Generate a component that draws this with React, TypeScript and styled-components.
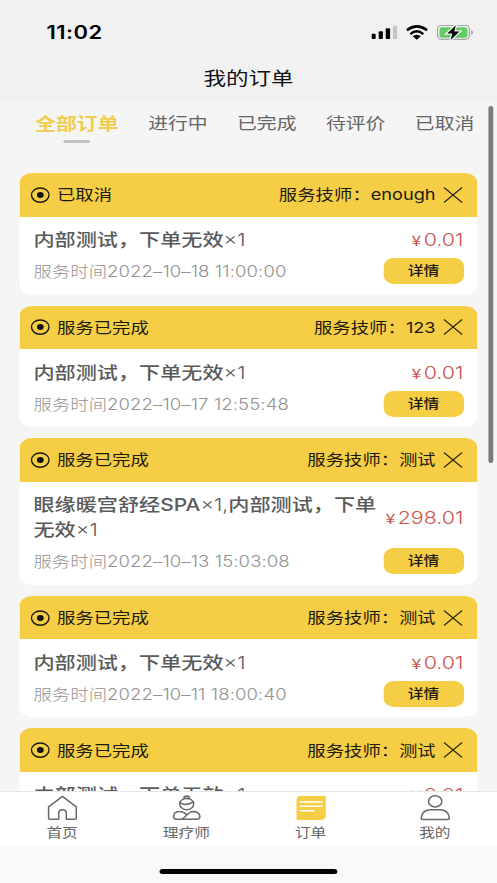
import React from "react";
import styled, { createGlobalStyle, css } from "styled-components";

/* The phone canvas is widened horizontally; x() converts on-screen widths to canvas widths. */
const STRETCH = 1.218;
const x = (n: number) => `${(n / STRETCH).toFixed(3)}px`;

const yellow = "#f5ce45";
const cjk = `"Noto Sans CJK SC", sans-serif`;
const latin = `Inter, "Noto Sans CJK SC", sans-serif`;

const GlobalStyle = createGlobalStyle`
  html, body { margin: 0; padding: 0; width: 497px; height: 883px; overflow: hidden; background: #f5f5f5; }
  * { box-sizing: border-box; }
`;

const Viewport = styled.div`
  width: 497px;
  height: 883px;
  overflow: hidden;
`;

const Phone = styled.div`
  width: ${x(497)};
  height: 883px;
  transform: scaleX(${STRETCH});
  transform-origin: 0 0;
  display: flex;
  flex-direction: column;
  position: relative;
  background: #f5f5f5;
  font-family: ${cjk};
  color: #1c1a10;
  white-space: nowrap;
`;

const Icon = styled.svg.attrs({ preserveAspectRatio: "none" })<{ $w: number; $h: number }>`
  display: block;
  flex: none;
  width: ${(p) => x(p.$w)};
  height: ${(p) => p.$h}px;
`;

const TopBar = styled.header`
  flex: none;
  height: 101px;
  background: #f1f1f1;
`;

const StatusBar = styled.div`
  height: 54px;
  padding: 11px ${x(19.5)} 0 ${x(46.5)};
  display: flex;
  align-items: center;
  justify-content: space-between;
`;

const Clock = styled.div`
  font: 600 18px/24px ${latin};
  letter-spacing: 0.4px;
  color: #000;
`;

const PageTitle = styled.h1`
  margin: 0;
  height: 47px;
  font: 400 18.5px/46px ${cjk};
  color: #111;
  text-align: center;
`;

const Tabs = styled.nav`
  flex: none;
  height: 72px;
  padding: 9px 0 0 ${x(35)};
  display: flex;
  gap: ${x(29.4)};
`;

const Tab = styled.div<{ $active?: boolean }>`
  display: flex;
  flex-direction: column;
  align-items: center;
  font: 400 16.3px/25px ${cjk};
  color: #666;
  ${(p) =>
    p.$active &&
    css`
      font-size: 17.2px;
      font-weight: 700;
      color: #efcc4c;
      &::after {
        content: "";
        width: ${x(27)};
        height: 3px;
        margin-top: 5px;
        border-radius: 2px;
        background: #c1c1c1;
      }
    `}
`;

const List = styled.main`
  flex: none;
  height: 618px;
  overflow: hidden;
  padding: 0 ${x(20)};
  display: flex;
  flex-direction: column;
  gap: 11.1px;
`;

const Card = styled.article`
  flex: none;
  border-radius: 10px;
  overflow: hidden;
  background: #fff;
`;

const CardHead = styled.div`
  height: 43.5px;
  padding: 0 ${x(13.5)} 0 ${x(10)};
  display: flex;
  align-items: center;
  background: ${yellow};
  font: 400 15.1px/24px ${cjk};
`;

const Status = styled.span`
  flex: 1;
  margin: -3px 0 0 ${x(7)};
`;

const Technician = styled.span`
  margin: -3px ${x(8)} 0 0;
`;

const TechName = styled.span`
  font-family: ${latin};
  font-size: 14.9px;
  line-height: 0;
`;

const CardBody = styled.div`
  padding: 11px ${x(13.5)} 10.5px ${x(13.5)};
  display: flex;
  flex-direction: column;
  gap: 5.5px;
`;

const Row = styled.div`
  display: flex;
  align-items: center;
  justify-content: space-between;
`;

const ItemName = styled.div`
  margin: -1.6px 0 1.6px;
  font: 500 17.35px/25px ${cjk};
  color: #5a5a5a;
`;

const Latin = styled.span<{ $weight?: number }>`
  font-family: ${latin};
  font-weight: ${(p) => p.$weight ?? 300};
  font-size: 17.2px;
  line-height: 0;
`;

const Price = styled.div`
  margin-top: -1px;
  font: 300 17.6px/25px ${latin};
  color: #c9524c;
  small {
    font: 400 14.5px/0 ${cjk};
    margin-right: 2px;
  }
`;

const Time = styled.div`
  height: 26px;
  font: 300 15.1px/24px ${cjk};
  color: #929292;
`;

const Digits = styled.span`
  font-family: ${latin};
  font-weight: 300;
  font-size: 15.2px;
  letter-spacing: 0.1px;
  line-height: 0;
`;

const DetailButton = styled.button`
  width: ${x(80)};
  height: 26px;
  padding: 0 0 2px;
  border: 0;
  border-radius: 8.5px;
  background: ${yellow};
  color: #1c1a10;
  font: 500 13px/24px ${cjk};
`;

const ScrollThumb = styled.div`
  position: absolute;
  top: 105.5px;
  right: ${x(4)};
  width: ${x(4)};
  height: 357px;
  border-radius: 2px;
  background: #7b7b7b;
`;

const NavBar = styled.nav`
  flex: none;
  height: 55px;
  border-top: 1px solid #e6e6e6;
  background: #fff;
  display: grid;
  grid-template-columns: repeat(4, 1fr);
`;

const NavItem = styled.div`
  display: flex;
  flex-direction: column;
  align-items: center;
  padding-top: 3px;
  font: 400 12.9px/22px ${cjk};
  color: #666;
`;

const Footer = styled.footer`
  flex: 1;
  padding-top: 23px;
  background: #f8f8f8;
  display: flex;
  justify-content: center;
`;

const HomeIndicator = styled.div`
  width: ${x(178)};
  height: 5px;
  border-radius: 3px;
  background: #000;
`;

const StatusIcons = () => (
  <Icon $w={106} $h={20} viewBox="0 0 106 20">
    <g transform="translate(0 -.7)">
      <rect x="0" y="11.5" width="4.2" height="5.2" rx="1" />
      <rect x="7.2" y="9" width="4.2" height="7.7" rx="1" />
      <rect x="14.2" y="6" width="4.4" height="10.7" rx="1" />
      <rect x="21.5" y="3.4" width="4.2" height="13.3" rx="1" fill="#c6c6c6" />
      <g fill="none" stroke="#000" strokeWidth="2.5">
        <path d="M35.4 8Q45.3 .2 55.6 8" />
        <path d="M38.9 11.8Q45.3 6.2 51.8 11.8" />
      </g>
      <path d="M41.2 14Q45.3 11 49.4 14L45.3 17.4Z" />
      <rect x="66" y="3.2" width="32" height="13.8" rx="4" fill="none" stroke="#a5a5a5" strokeWidth="1.2" />
      <rect x="68" y="5" width="28" height="10.4" rx="2.5" fill="#63cb63" />
      <path d="M99.8 8v4.4q1.6-.5 1.6-2.2T99.8 8Z" fill="#999" />
      <path d="M84.3 3 75.8 11.2H80.8L79.2 17.6 88 9.2H82.9Z" stroke="#f1f1f1" strokeWidth="2.6" paintOrder="stroke" />
    </g>
  </Icon>
);

const TargetIcon = () => (
  <Icon $w={20} $h={18} viewBox="0 0 20 18" fill="none" stroke="#1c1a10">
    <ellipse cx="9.8" cy="9.1" rx="8.8" ry="7.1" strokeWidth="1.4" />
    <ellipse cx="9.9" cy="9" rx="3.4" ry="2.9" fill="#111" stroke="none" />
  </Icon>
);

const CloseIcon = () => (
  <Icon $w={20} $h={18} viewBox="0 0 20 18" fill="none" stroke="#2b2612" strokeWidth="1.15">
    <path d="M.6 1.5 18.8 16.5M18.8 1.5.6 16.5" />
  </Icon>
);

const line = { fill: "none", stroke: "#696969", strokeWidth: 1.5, strokeLinejoin: "round" as const, strokeLinecap: "round" as const };

const HomeIcon = () => (
  <Icon $w={32} $h={26} viewBox="0 0 32 26" {...line}>
    <path d="M2.3 11.8 16.2 1.4 30 11.8V23Q30 24.3 28.8 24.3H20V18.2Q20 14.8 16.2 14.8T12.4 18.2V24.3H3.5Q2.3 24.3 2.3 23Z" />
  </Icon>
);

const TherapistIcon = () => (
  <Icon $w={32} $h={26} viewBox="0 0 32 26" {...line}>
    <ellipse cx="16.2" cy="9" rx="7" ry="5.7" />
    <ellipse cx="16.2" cy="2.3" rx="2.7" ry="1.3" />
    <path d="M9.4 7.6Q15.5 11.6 22.6 6.8" />
    <path d="M11.6 24.3H6.2Q3 24.3 3 21.6 3.2 16.4 9.2 16.4 13.2 16.2 15.8 19.8M11.6 24.3 19.6 17.2Q21 16.4 23.2 16.4 29.2 16.8 29.4 21.6 29.4 24.3 26.4 24.3Z" />
  </Icon>
);

const OrdersIcon = () => (
  <Icon $w={32} $h={26} viewBox="0 0 32 26">
    <path d="M5.5.9H31V20Q31 25 25.8 25H3.2Q1.8 25 1.8 23.7V4.8Q1.8.9 5.5.9Z" fill={yellow} />
    <path d="M5.3 7H27.5M5.3 11.3H27.5M5.3 15.8H19.5" fill="none" stroke="#fff" strokeWidth="1.5" strokeLinecap="round" />
  </Icon>
);

const ProfileIcon = () => (
  <Icon $w={32} $h={26} viewBox="0 0 32 26" {...line}>
    <ellipse cx="16.2" cy="6.4" rx="6.6" ry="5.6" />
    <path d="M2.2 22.9Q3 14.7 12 14.7H20.5Q29.5 14.7 30.3 22.9 30.3 24.4 28.3 24.4H4.2Q2.2 24.4 2.2 22.9Z" />
  </Icon>
);

const testItem = (
  <>
    内部测试，下单无效<Latin>×1</Latin>
  </>
);

interface Order {
  status: string;
  tech: string;
  item: React.ReactNode;
  price: string;
  time?: string;
}

const orders: Order[] = [
  { status: "已取消", tech: "enough", item: testItem, price: "0.01", time: "2022–10–18 11:00:00" },
  { status: "服务已完成", tech: "123", item: testItem, price: "0.01", time: "2022–10–17 12:55:48" },
  {
    status: "服务已完成",
    tech: "测试",
    item: (
      <>
        眼缘暖宫舒经<Latin $weight={500}>SPA</Latin>
        <Latin>×1,</Latin>内部测试，下单
        <br />
        无效<Latin>×1</Latin>
      </>
    ),
    price: "298.01",
    time: "2022–10–13 15:03:08",
  },
  { status: "服务已完成", tech: "测试", item: testItem, price: "0.01", time: "2022–10–11 18:00:40" },
  { status: "服务已完成", tech: "测试", item: testItem, price: "0.01" },
];

export default function App() {
  return (
    <Viewport>
      <GlobalStyle />
      <Phone>
        <TopBar>
          <StatusBar>
            <Clock>11:02</Clock>
            <StatusIcons />
          </StatusBar>
          <PageTitle>我的订单</PageTitle>
        </TopBar>
        <Tabs>
          <Tab $active>全部订单</Tab>
          <Tab>进行中</Tab>
          <Tab>已完成</Tab>
          <Tab>待评价</Tab>
          <Tab>已取消</Tab>
        </Tabs>
        <List>
          {orders.map((o, i) => (
            <Card key={i}>
              <CardHead>
                <TargetIcon />
                <Status>{o.status}</Status>
                <Technician>
                  服务技师：<TechName>{o.tech}</TechName>
                </Technician>
                <CloseIcon />
              </CardHead>
              <CardBody>
                <Row>
                  <ItemName>{o.item}</ItemName>
                  <Price>
                    <small>¥</small>
                    {o.price}
                  </Price>
                </Row>
                {o.time && (
                  <Row>
                    <Time>
                      服务时间<Digits>{o.time}</Digits>
                    </Time>
                    <DetailButton>详情</DetailButton>
                  </Row>
                )}
              </CardBody>
            </Card>
          ))}
        </List>
        <NavBar>
          <NavItem><HomeIcon />首页</NavItem>
          <NavItem><TherapistIcon />理疗师</NavItem>
          <NavItem><OrdersIcon />订单</NavItem>
          <NavItem><ProfileIcon />我的</NavItem>
        </NavBar>
        <Footer>
          <HomeIndicator />
        </Footer>
        <ScrollThumb />
      </Phone>
    </Viewport>
  );
}
